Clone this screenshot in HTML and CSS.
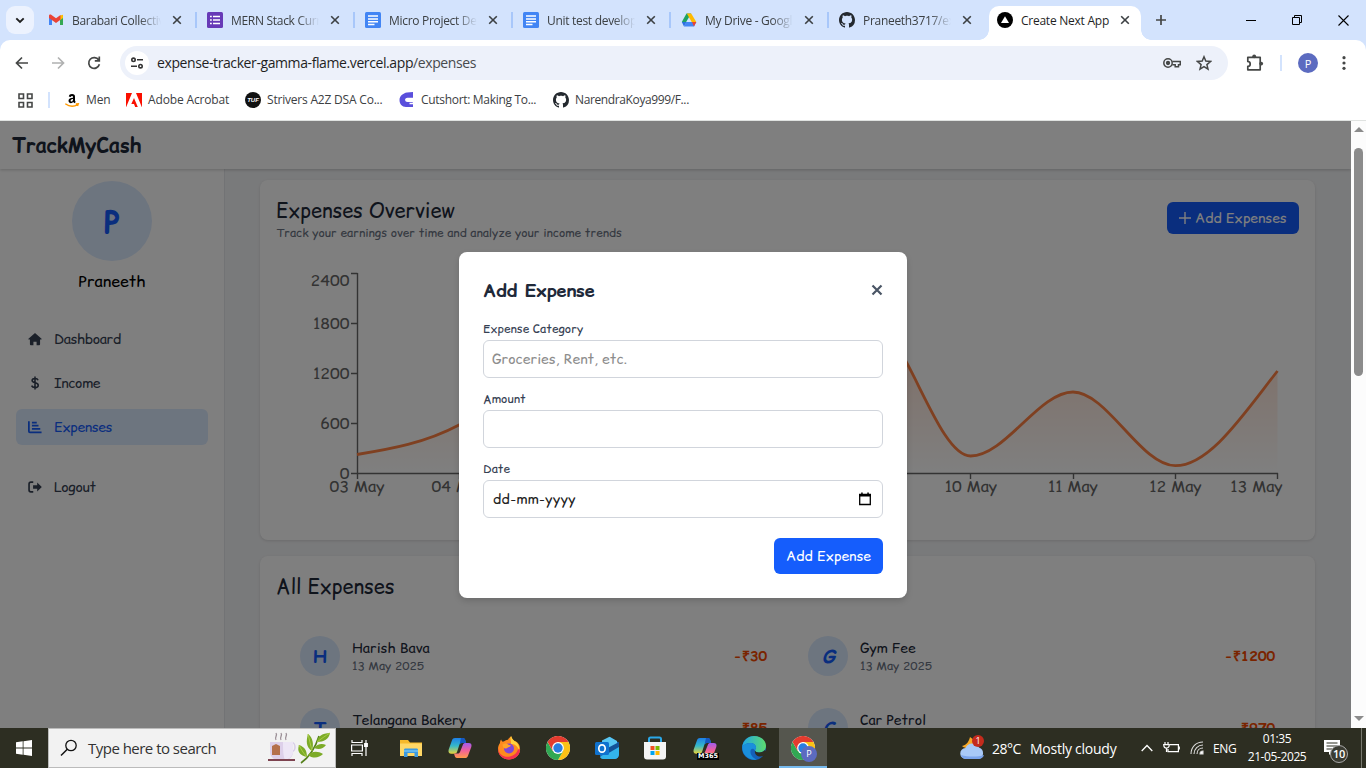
FILE: index.html
```html
<!DOCTYPE html>
<html lang="en">
<head>
<meta charset="utf-8">
<title>Create Next App</title>
<link rel="stylesheet" href="styles.css">
</head>
<body>
<svg width="0" height="0" class="defs">
  <defs>
    <symbol id="x" viewBox="0 0 10 10"><path d="M1.2 1.2l7.6 7.6M8.8 1.2L1.2 8.8" stroke="currentColor" stroke-width="1.6" fill="none"/></symbol>
    <symbol id="doc" viewBox="0 0 16 16"><rect width="16" height="16" rx="1.5" fill="#4285f4"/><path d="M3 4h10M3 7h10M3 9.700h10M3 12.500h6.500" stroke="#fff" stroke-width="1.400"/></symbol>
    <symbol id="gh" viewBox="0 0 16 16"><path fill="#24292f" d="M8 0C3.580 0 0 3.580 0 8c0 3.540 2.290 6.530 5.470 7.590.4.070.550-.170.550-.380 0-.190-.010-.820-.010-1.490-2.010.370-2.530-.490-2.690-.940-.090-.230-.480-.940-.820-1.130-.280-.150-.680-.520-.010-.530.630-.010 1.080.580 1.230.820.720 1.210 1.870.870 2.330.660.070-.520.280-.870.510-1.070-1.780-.200-3.640-.890-3.640-3.950 0-.870.310-1.590.820-2.150-.080-.200-.360-1.020.080-2.120 0 0 .670-.210 2.200.820.640-.180 1.320-.270 2-.270s1.360.090 2 .270c1.530-1.040 2.200-.820 2.200-.820.440 1.100.160 1.920.080 2.120.510.560.820 1.270.820 2.150 0 3.070-1.870 3.750-3.650 3.950.290.250.540.730.540 1.480 0 1.070-.010 1.930-.010 2.200 0 .210.150.460.550.380A8.010 8.010 0 0 0 16 8c0-4.420-3.580-8-8-8z"/></symbol>
    <symbol id="chrome" viewBox="0 0 24 24"><circle cx="12" cy="12" r="12" fill="#fff"/><path d="M12 6H22.400A12 12 0 0 1 12 24L17.200 15z" fill="#fbc116"/><path d="M6.800 15L1.600 6A12 12 0 0 0 12 24L17.200 15z" fill="#31a853"/><path d="M1.600 6A12 12 0 0 1 22.400 6H12L6.800 15z" fill="#e33b2e"/><circle cx="12" cy="12" r="5.900" fill="#fff"/><circle cx="12" cy="12" r="4.700" fill="#2a7de1"/></symbol>
    <linearGradient id="cpA" x1="0" y1="0" x2="0" y2="1"><stop offset="0" stop-color="#1d7fe8"/><stop offset=".5" stop-color="#35b8c9"/><stop offset="1" stop-color="#e8d43a"/></linearGradient>
    <linearGradient id="cpB" x1="0" y1="0" x2="0" y2="1"><stop offset="0" stop-color="#a25bf0"/><stop offset=".5" stop-color="#f0609a"/><stop offset="1" stop-color="#ff9a4a"/></linearGradient>
    <symbol id="copilot" viewBox="0 0 24 24"><path d="M7 2h8c1.500 0 2 1 2.400 2.500L18 7h-4c-1.500 0-2.300.8-2.800 2.300L9.200 15.500c-.5 1.500-1.300 2.200-3 2.200H3.500C.8 17.700 0 16 .7 13.500L4 4.300C4.500 2.800 5.500 2 7 2z" fill="url(#cpA)"/><path d="M13 2h2c1.500 0 2 1 2.400 2.500L18 7h-4c-1.200 0-2 .5-2.500 1.500z" fill="#1457c2"/><path d="M17 22H9c-1.500 0-2-1-2.400-2.500L6 17.500h3.500c1.500 0 2.300-.8 2.800-2.300l2.500-6.200c.5-1.500 1.300-2 3-2h2.700c2.700 0 3.500 1.500 2.800 4l-3.300 8.700C19.500 21.200 18.500 22 17 22z" fill="url(#cpB)"/></symbol>
  </defs>
</svg>

<div class="screen">
  <header class="tabs">
    <button class="tab-search"><svg width="10" height="7" viewBox="0 0 10 7"><path d="M1.300 1.300L5 5l3.700-3.700" fill="none" stroke="#1f1f1f" stroke-width="1.900"/></svg></button>
    <div class="tab first"><svg class="fav" viewBox="0 0 16 16"><path d="M1 4v9h3V6.500z" fill="#4285f4"/><path d="M15 4v9h-3V6.500z" fill="#34a853"/><path d="M12 3.500L15 2.800V6l-3 2.300z" fill="#fbbc04"/><path d="M1 3.800C1 2.500 2.500 2.200 3.500 3L8 6.300 12.500 3v4.800L8 11 1 6z" fill="#ea4335"/></svg><span>Barabari Collective</span><svg class="tx"><use href="#x"/></svg></div>
    <div class="tab"><svg class="fav" viewBox="0 0 16 16"><rect width="16" height="16" rx="1.500" fill="#673ab7"/><path d="M6 4.500h7M6 8h7M6 11.500h7" stroke="#fff" stroke-width="1.700"/><path d="M3 4.500h1.800M3 8h1.800M3 11.500h1.800" stroke="#fff" stroke-width="1.700"/></svg><span>MERN Stack Curriculum</span><svg class="tx"><use href="#x"/></svg></div>
    <div class="tab"><svg class="fav"><use href="#doc"/></svg><span>Micro Project Details</span><svg class="tx"><use href="#x"/></svg></div>
    <div class="tab"><svg class="fav"><use href="#doc"/></svg><span>Unit test development</span><svg class="tx"><use href="#x"/></svg></div>
    <div class="tab"><svg class="fav" viewBox="0 0 16 16"><path d="M5.500 1.500h4.600L4 12 .8 10z" fill="#1ea362"/><path d="M5.800 1.500h4.400L15.300 10h-4.600z" fill="#ffba00"/><path d="M3 14.500L5.200 10h10.100L13 14.500z" fill="#4285f4"/><path d="M.8 10L3 14.500 5.200 10z" fill="#2b6fe0"/><path d="M11 10h4.300L13 14.500z" fill="#ea4335"/></svg><span>My Drive - Google Drive</span><svg class="tx"><use href="#x"/></svg></div>
    <div class="tab"><svg class="fav"><use href="#gh"/></svg><span>Praneeth3717/expense</span><svg class="tx"><use href="#x"/></svg></div>
    <div class="tab active"><svg class="fav" viewBox="0 0 16 16"><circle cx="8" cy="8" r="8"/><path d="M8 4.300l4 6.700H4z" fill="#fff"/></svg><span>Create Next App</span><svg class="tx"><use href="#x"/></svg></div>
    <svg class="plus" width="12" height="12" viewBox="0 0 12 12"><path d="M6 1v10M1 6h10" stroke="#454746" stroke-width="1.700"/></svg>
    <div class="win">
      <svg width="10" height="10"><path d="M0 5.500h10" stroke="#000"/></svg>
      <svg width="10" height="10"><path d="M.5 2.500h7v7h-7zM2.500 2.500v-2h7v7h-2" fill="none" stroke="#000"/></svg>
      <svg width="11" height="11"><path d="M.5.5l10 10M10.500.5l-10 10" stroke="#000" stroke-width="1.100"/></svg>
    </div>
  </header>

  <div class="chrome-body">
    <div class="toolbar">
      <svg class="nav" viewBox="0 0 16 16"><path d="M14 8H3M8 2.500L2.500 8 8 13.500" fill="none" stroke="#454746" stroke-width="1.700"/></svg>
      <svg class="nav" viewBox="0 0 16 16"><path d="M2 8h11M8 2.500L13.500 8 8 13.500" fill="none" stroke="#b0b1b1" stroke-width="1.700"/></svg>
      <svg class="nav" viewBox="0 0 16 16"><path d="M12.700 5A5.400 5.400 0 1 0 13.400 9.300M13.300 1.500v4.400H8.800" fill="none" stroke="#454746" stroke-width="1.700"/></svg>
      <div class="omni">
        <span class="site"><svg width="14" height="14" viewBox="0 0 14 14" fill="none" stroke="#333" stroke-width="1.600"><circle cx="3.500" cy="3.800" r="1.700"/><path d="M7 3.800h6M1 10.200h6"/><circle cx="10.500" cy="10.200" r="1.700"/></svg></span>
        <p class="url">expense-tracker-gamma-flame.vercel.app<i>/expenses</i></p>
        <svg class="key" width="18" height="12" viewBox="0 0 18 12" fill="none" stroke="#454746" stroke-width="1.500"><circle cx="5" cy="6" r="4.200"/><circle cx="5" cy="6" r="1.400" fill="#454746"/><path d="M9.300 4.500h8v3.300h-1.800v2h-3.300V7.800H9.300"/></svg>
        <svg class="star" width="16" height="16" viewBox="0 0 16 16"><path d="M8 1.800l1.800 4.300 4.700.4-3.600 3.100 1.100 4.600L8 11.700l-4 2.500 1.100-4.600L1.500 6.500l4.700-.4z" fill="none" stroke="#454746" stroke-width="1.500"/></svg>
      </div>
      <svg class="ext" width="18" height="18" viewBox="0 0 18 18"><path d="M1.800 3.300h12.400v12.500H1.800v-3.500a2.200 2.200 0 0 0 0-4.800z" fill="none" stroke="#454746" stroke-width="1.700" stroke-linejoin="round"/><circle cx="8.200" cy="2.300" r="1.900" fill="#454746"/><circle cx="15.200" cy="9.600" r="1.900" fill="#454746"/></svg>
      <i class="vbar"></i>
      <b class="prof">P</b>
      <svg class="dots" width="4" height="14" viewBox="0 0 4 14" fill="#454746"><circle cx="2" cy="1.700" r="1.600"/><circle cx="2" cy="7" r="1.600"/><circle cx="2" cy="12.300" r="1.600"/></svg>
    </div>
    <div class="marks">
      <svg class="apps" width="15" height="15" viewBox="0 0 15 15" fill="none" stroke="#454746" stroke-width="1.600"><path d="M1 1h4.500v4.500H1zM9.500 1H14v4.500H9.500zM1 9.500h4.500V14H1zM9.500 9.500H14V14H9.500z"/></svg>
      <i class="vbar"></i>
      <div class="mark m1"><svg class="fav" viewBox="0 0 16 16"><path d="M4.800 4.500C5 2.600 6.200 1.900 8 1.900c2.200 0 3 1 3 2.800v3.600c0 .8.300 1.200.8 1.700l-1.500 1.200-1-1.100c-1.600 1.900-4.800 1.300-4.800-1.400 0-2.100 1.800-3 4.500-3v-.8c0-1.200-1.900-1.400-2.300 0zM9 7c-2.700 0-2.900 2.600-1.500 2.600C8.600 9.600 9 8.500 9 7z"/><path d="M1.300 11.800c4 2.900 8.700 3 12.400.8M11.800 12l2.500-.2-.8 2.300" stroke="#f90" stroke-width="1.400" fill="none"/></svg><span>Men</span></div>
      <div class="mark m2"><svg class="fav" viewBox="0 0 16 16"><path d="M0 1h6L.2 15H0zM16 1h-6l5.800 14h.2zM8 6l3.800 9H9.200l-1.200-3H5.300z" fill="#fa0f00"/></svg><span>Adobe Acrobat</span></div>
      <div class="mark m3"><b class="tuf">TUF</b><span>Strivers A2Z DSA Co...</span></div>
      <div class="mark m4"><svg class="fav" viewBox="0 0 16 16"><path d="M14 0v5.800H8.500c-1.600 0-2.300 1-2.300 2.300s.8 2 2.300 2H14V15H7C3 15 .5 12 .5 8S4 1.200 8 .5z" fill="#5a4fdc"/><path d="M6.500 7.500h8v4h-4" fill="none" stroke="#fff" stroke-width="1.500"/></svg><span>Cutshort: Making To...</span></div>
      <div class="mark m5"><svg class="fav"><use href="#gh"/></svg><span>NarendraKoya999/F...</span></div>
    </div>
  </div>

  <div class="page">
    <div class="app">
      <header class="brand">TrackMyCash</header>
      <div class="cols">
        <aside>
          <div class="avatar">P</div>
          <p class="name">Praneeth</p>
          <nav>
            <a><svg viewBox="0 0 16 16"><path d="M8 1L.5 7.700c-.3.400 0 .9.500.9h1.200v5.400c0 .6.400 1 1 1h3v-4h3.600v4h3c.6 0 1-.4 1-1V8.600H15c.5 0 .8-.5.500-.9z"/></svg><span>Dashboard</span></a>
            <a><svg viewBox="0 0 16 16"><path d="M11.500 4.800C11 3.300 9.700 2.800 8 2.800c-2 0-3.300.9-3.300 2.400C4.700 8.600 11.700 7 11.700 10.500c0 1.800-1.500 2.700-3.700 2.700-2 0-3.400-.8-3.900-2.200M8 .5v15" fill="none" stroke="currentColor" stroke-width="1.800"/></svg><span>Income</span></a>
            <a class="on"><svg viewBox="0 0 16 16"><path d="M1 1.500v11.300c0 .8.400 1.200 1.200 1.200H15.500M4.500 3h5.500M4.500 6.500h7.500M4.500 10h9.500" fill="none" stroke="currentColor" stroke-width="2"/></svg><span>Expenses</span></a>
            <a class="out"><svg viewBox="0 0 16 16"><path d="M6 2.500H3.300C2 2.500 1.200 3.300 1.200 4.600v6.800c0 1.300.8 2.100 2.100 2.100H6" fill="none" stroke="currentColor" stroke-width="1.900"/><path d="M15.800 8l-5.300-5.200V6H5.800v4h4.700v3.200z"/></svg><span>Logout</span></a>
          </nav>
        </aside>
        <main>
          <section class="card chart-card">
            <div class="card-head">
              <div><h2>Expenses Overview</h2><p>Track your earnings over time and analyze your income trends</p></div>
              <button class="btn add"><svg width="12" height="12" viewBox="0 0 12 12"><path d="M6 0v12M0 6h12" stroke="#fff" stroke-width="1.400"/></svg>Add Expenses</button>
            </div>
            <svg class="chart" width="1023" height="270" viewBox="276 250 1023 270">
              <defs><linearGradient id="ar" x1="0" y1="0" x2="0" y2="1"><stop offset="0" stop-color="#ff8042" stop-opacity=".3"/><stop offset="1" stop-color="#ff8042" stop-opacity="0"/></linearGradient></defs>
              <path d="M357 454.500C391 449 425 443 459 425S527 340 561 340S629 420 663.800 420S732 380 766 380S834 319 868.300 319S936 456 970.600 456S1039 392 1073 392S1141 465.700 1175.300 465.700S1243 415 1277.500 371V473H357z" fill="url(#ar)"/>
              <path d="M357.500 273v200M351 273.500h6.500M351 323.500h6.500M351 373.500h6.500M351 423.500h6.500M351 473.500H1278M357.500 473v6M459.500 473v6M970.500 473v6M1073.500 473v6M1175.500 473v6M1277.500 473v6" stroke="#666" fill="none" stroke-width="1.400"/>
              <path d="M357 454.500C391 449 425 443 459 425S527 340 561 340S629 420 663.800 420S732 380 766 380S834 319 868.300 319S936 456 970.600 456S1039 392 1073 392S1141 465.700 1175.300 465.700S1243 415 1277.500 371" fill="none" stroke="#ff8042" stroke-width="2.800"/>
              <g class="yl"><text x="349.500" y="286">2400</text><text x="349.500" y="329">1800</text><text x="349.500" y="379">1200</text><text x="349.500" y="429">600</text><text x="349.500" y="479">0</text></g>
              <g class="xl"><text x="357" y="492">03 May</text><text x="459" y="492">04 May</text><text x="971" y="492">10 May</text><text x="1073" y="492">11 May</text><text x="1175.500" y="492">12 May</text><text x="1256.500" y="492">13 May</text></g>
            </svg>
          </section>
          <section class="card list-card">
            <h2>All Expenses</h2>
            <div class="grid">
              <div class="row"><b class="ini">H</b><div><p>Harish Bava</p><small>13 May 2025</small></div><strong>-₹30</strong></div>
              <div class="row"><b class="ini slant">G</b><div><p>Gym Fee</p><small>13 May 2025</small></div><strong>-₹1200</strong></div>
              <div class="row"><b class="ini">T</b><div><p>Telangana Bakery</p><small>12 May 2025</small></div><strong>-₹85</strong></div>
              <div class="row"><b class="ini slant">C</b><div><p>Car Petrol</p><small>11 May 2025</small></div><strong>-₹970</strong></div>
            </div>
          </section>
        </main>
      </div>
      <div class="overlay">
        <form class="modal">
          <div class="modal-head"><h3>Add Expense</h3><svg width="12" height="12"><path d="M1.500 1.500l9 9M10.500 1.500l-9 9" stroke="#4a5565" stroke-width="2.200"/></svg></div>
          <label>Expense Category</label>
          <div class="field ph">Groceries, Rent, etc.</div>
          <label>Amount</label>
          <div class="field"></div>
          <label>Date</label>
          <div class="field date"><span>dd-mm-yyyy</span><svg width="12" height="14" viewBox="0 0 12 14"><path d="M.7 2.500h10.600v10H.7z" fill="none" stroke="#000" stroke-width="1.300"/><path d="M0 2h12v2.500H0zM2.200.5h1.500V3H2.200zM8.300.5h1.500V3H8.300z"/></svg></div>
          <button class="btn submit" type="button">Add Expense</button>
        </form>
      </div>
    </div>
    <div class="scroll"><i class="up"></i><i class="thumb"></i><i class="down"></i></div>
  </div>

  <footer class="taskbar">
    <div class="start"><svg width="16" height="16" viewBox="0 0 16 16" fill="#fff"><path d="M0 2.300L6.700 1.300v6.300H0zM7.500 1.200L16 0v7.600H7.500zM0 8.400h6.700v6.300L0 13.700zM7.500 8.400H16V16l-8.500-1.200z"/></svg></div>
    <div class="search">
      <svg width="18" height="18" viewBox="0 0 18 18"><circle cx="11" cy="6.500" r="5.200" fill="none" stroke="#111" stroke-width="1.300"/><path d="M7.300 10.300L1 16.500" stroke="#111" stroke-width="1.500"/></svg>
      <span>Type here to search</span>
      <svg class="tea" width="64" height="34" viewBox="0 0 64 34">
        <path d="M9 2c2 3-2 4 0 7M14 2c2 3-2 4 0 7M19 2c2 3-2 4 0 7" stroke="#9b8f96" fill="none" stroke-width="1.300"/>
        <ellipse cx="25" cy="16" rx="3" ry="4.500" fill="none" stroke="#d8cde8" stroke-width="1.500"/>
        <path d="M3 11h23v10c0 5-4 8-8 8h-7c-5 0-8-4-8-8z" fill="#ddd0ea"/><path d="M16 11h10v10c0 4-4 7-8 8-2-4-2-12-2-18z" fill="#ede6f6"/>
        <path d="M5 15l4-2 4 2v9H5z" fill="#b4704c"/><path d="M1 28h27v2H1z" fill="#7d4350"/>
        <path d="M34 32C41 27 48 18 52 5" stroke="#55801c" fill="none" stroke-width="1.600"/>
        <path d="M40 26c-8-2-10-6-8-12 6 2 8 6 8 12zM45 20c-6-4-6-10-4-17 5 4 6 10 4 17zM50 11c0-5 5-9 13-9-1 6-6 9-13 9zM47 17c3-4 8-5 12-3-3 4-7 5-12 3zM41 24c4-4 10-4 15-1-4 4-10 5-15 1z" fill="#7cab28"/>
        <path d="M40 26c-4-4-6-8-8-12M45 20c-1-6-3-11-4-17M50 11c4-3 8-6 13-9" stroke="#a9cc45" fill="none"/>
      </svg>
    </div>
    <div class="ti tv"><svg width="17" height="16" viewBox="0 0 17 16" fill="none" stroke="#fff" stroke-width="1.200"><path d="M1 0v2.500h10V0M1 16v-2.500h10V16M.6 5h10.800v6H.6zM15 0v16"/><path d="M13.700 3.500h2.600v3h-2.600z" fill="#fff"/></svg></div>
    <div class="ti"><svg width="22" height="20" viewBox="0 0 22 20"><path d="M0 2h8l2 2.500h12V18H0z" fill="#f7b92b"/><path d="M0 5.500h22V18H0z" fill="#ffd766"/><path d="M4 19v-7c0-1 .5-1.500 1.500-1.500h11c1 0 1.500.5 1.500 1.500v7h-3.500v-4h-7v4z" fill="#3d9ae0"/><path d="M4 12h14v2H4z" fill="#63b8f0"/></svg></div>
    <div class="ti"><svg width="24" height="24"><use href="#copilot"/></svg></div>
    <div class="ti"><svg width="24" height="24" viewBox="0 0 24 24"><path d="M3 7c0-1.500.5-3 1.200-3.500.3 1.200.8 1.800 1.500 2.200C8 5 9 4 11 3.700c.8-1.300 2-2.700 3.500-3.200 0 2 1.500 3 3 4.500C21.500 6 23.500 10 23 14.500 22 20 17.500 23.500 12 23.500 6 23.500 1 19 1 13c0-2.500.8-4.500 2-6z" fill="#ff8a1e"/><path d="M1.200 12C2 20 8 21.500 13 20.500c4-.8 7-3.500 8-7.500 2-1 1.900 1 1.900 2C22 20.500 17 23.500 12 23.500c-6 0-11.500-4-10.800-11.500z" fill="#f5314f"/><path d="M14.500.5c0 2 1.500 3 3 4.500 4 2 5 6 4.500 9-2-5-5-6-8-6 .5-2-1-4-.5-7.500z" fill="#ffd23e"/><circle cx="12" cy="12.500" r="5" fill="#8046d8"/><path d="M5.500 8.500c2-1.500 4.500-1 6 .3l2.500.7c-1 1.500-2.800 1.500-4 2.500-1.800 1.500-4.500 0-4.500-3.500z" fill="#ffa427"/></svg></div>
    <div class="ti"><svg width="24" height="24"><use href="#chrome"/></svg></div>
    <div class="ti"><svg width="24" height="24" viewBox="0 0 24 24"><path d="M5 7L15 1l9 6v11c0 3-2 5-4.500 5H9c-2.500 0-4-2-4-4z" fill="#1a6fc4"/><path d="M7 4.500L14.500.8 22 5v6l-8 5-7-4z" fill="#58c7f3"/><path d="M24 8v10c0 3-2 5-5 5H8c-1.500 0-2.500-1-3-2z" fill="#33b4ec"/><path d="M24 6v5L12 18l-5-3z" fill="#135298"/><rect x="0" y="6" width="14" height="13" rx="1.500" fill="#0f72cf"/><ellipse cx="7" cy="12.500" rx="3.200" ry="3.700" fill="none" stroke="#fff" stroke-width="1.700"/></svg></div>
    <div class="ti st"><svg width="24" height="24" viewBox="0 0 24 24"><path d="M6 7V3c0-1 .5-1.500 1.500-1.500h9c1 0 1.500.5 1.500 1.500v4" fill="none" stroke="#2aa8e8" stroke-width="2"/><path d="M1 6h22v14.500c0 2-1 3-3 3H4c-2 0-3-1-3-3z" fill="#f4f4f4"/><path d="M7.500 10h4v4h-4z" fill="#f25022"/><path d="M12.500 10h4v4h-4z" fill="#7fba00"/><path d="M7.500 15h4v4h-4z" fill="#00a4ef"/><path d="M12.500 15h4v4h-4z" fill="#ffb900"/></svg></div>
    <div class="ti m365"><svg width="24" height="24"><use href="#copilot"/></svg><b>M365</b></div>
    <div class="ti"><svg width="24" height="24" viewBox="0 0 24 24"><defs><linearGradient id="eg"><stop offset="0" stop-color="#1fa6e6"/><stop offset="1" stop-color="#5ddb6e"/></linearGradient></defs><circle cx="12" cy="12" r="12" fill="#1560b8"/><path d="M.2 11C1 4.500 6 0 12 0c7 0 12 4.500 12 10 0 4-3 6.500-7 6.500-2.500 0-4-1-4-2 0-1 1-1.500 1-3C14 9 11.500 7 8.500 7 4.500 7 1.500 9 .2 11z" fill="url(#eg)"/><path d="M.2 11C1.500 8.500 5 7 8.500 7 11.500 7 14 9 14 11.500c0 1.200-.8 2-1 3-1-2-3-2.500-4-1C7.500 16 9 21.500 15 23.500 8 25 0 20 .2 11z" fill="#1a8fdc"/><path d="M13 14.500c.3 1.200 2 2 4 2 2.500 0 4.500-1 5.500-2.200L24.500 15c-.5 2-1.300 3.300-2.500 4.800C17 22 12 19.500 13 14.500z" fill="#2d2e22"/></svg></div>
    <div class="ti run"><svg width="24" height="24"><use href="#chrome"/></svg><b>P</b></div>
    <div class="tray">
      <div class="wx"><svg width="26" height="26" viewBox="0 0 26 26"><path d="M11 2c-1 4-3 8-8 9 3 3 9 3 12-1V5z" fill="#f9a825"/><path d="M7 24a5.500 5.500 0 0 1-.5-11A7.500 7.500 0 0 1 20 12.500 6 6 0 0 1 19.500 24z" fill="#a9c9f7"/><path d="M2 20c1 3 3 4 5 4h12.500c3 0 5-2 5.500-4-6 2-16 2-23 0z" fill="#7ba4ec"/></svg><b>1</b></div>
      <span class="temp">28°C</span><span class="cloud">Mostly cloudy</span>
      <svg class="chev" width="12" height="8"><path d="M.7 7L6 1.500 11.300 7" fill="none" stroke="#fff" stroke-width="1.300"/></svg>
      <svg class="bat" width="17" height="12" viewBox="0 0 17 12" fill="none" stroke="#fff" stroke-width="1.200"><path d="M7 2.600h8.400v7H5V7M16.300 4.500v3M2 0v2.500M5 0v2.500M.7 2.600h5.600c0 2.500-1 3.500-2.800 3.500S.7 5 .7 2.600zM3.500 6v4"/></svg>
      <svg class="wifi" width="14" height="14" viewBox="0 0 14 14" fill="none" stroke="#ddd" stroke-width="1.100"><path d="M1 13C1 6 6 1 13 1M4 13c0-5 4-9 9-9M7 13c0-3.500 2.500-6 6-6"/><path d="M10 13c0-2 1-3 3-3v3z" fill="#fff"/></svg>
      <span class="eng">ENG</span>
      <div class="clock"><span>01:35</span><span>21-05-2025</span></div>
      <div class="note"><svg width="17" height="16" viewBox="0 0 17 16"><path d="M0 0h16v12H8l-3 3v-3H0z" fill="#fff"/><path d="M2.500 3h11M2.500 6h11M2.500 9h6" stroke="#2d2e22" stroke-width="1.200"/></svg><b>10</b></div>
      <i class="peek"></i>
    </div>
  </footer>
</div>
</body>
</html>
```
FILE: styles.css
```css
*{box-sizing:border-box}
body,p,h2,h3{margin:0}
body{font-family:"Open Sans",sans-serif;overflow:hidden}
button{border:0;padding:0;font:inherit}
svg{display:block;flex:none}
.defs{position:absolute}
.screen{width:1366px;height:768px;display:flex;flex-direction:column;background:#d3e3fd}

/* tab strip */
.tabs{height:40px;display:flex;align-items:center;flex:none}
.tab-search{width:28px;height:28px;margin:0 4px 0 6px;border-radius:9px;background:#ecf2fe;display:grid;place-items:center;flex:none}
.fav{width:16px;height:16px}
.tab{width:158px;height:34px;display:flex;align-items:center;position:relative;padding-left:11px;flex:none;font-size:12px;letter-spacing:-.3px;color:#3c4043}
.tab>span{margin-left:8px;width:90px;overflow:hidden;white-space:nowrap;mask-image:linear-gradient(90deg,#000 74%,transparent 98%)}
.first{padding-left:10px}
.first>span{width:91px}
.tab:not(.active):not(.first)::before{content:"";position:absolute;left:-1px;top:9px;width:2px;height:16px;background:#a8c7fa}
.tx{width:10px;height:10px;margin-left:9px;color:#3c4043}
.active{align-self:flex-end;z-index:0;padding-bottom:6px;color:#1f1f1f;letter-spacing:-.25px}
.active>span{mask-image:none}
.active::after{content:"";position:absolute;z-index:-1;left:3px;width:152px;top:0;bottom:0;background:#fff;border-radius:10px 10px 0 0}
.active::before{content:"";position:absolute;z-index:-1;left:-7px;width:172px;bottom:0;height:10px;background:radial-gradient(circle at 0 0,transparent 9.5px,#fff 10px) 0 0/10px 10px no-repeat,radial-gradient(circle at 100% 0,transparent 9.5px,#fff 10px) 100% 0/10px 10px no-repeat}
.plus{margin-left:11px}
.win{margin:0 17px 0 auto;display:flex;align-items:center;gap:36px}

/* toolbar */
.chrome-body{height:81px;background:#fff;border-radius:10px 10px 0 0;border-bottom:1px solid #dfe2e0;flex:none}
.toolbar{height:46px;display:flex;align-items:center}
.nav{width:16px;height:16px;margin-left:20px}
.nav:first-child{margin-left:14px}
.omni{width:1108px;height:34px;margin-left:18px;border-radius:17px;background:#edf1fa;display:flex;align-items:center;padding:0 16px 0 5px;flex:none}
.site{width:24px;height:24px;border-radius:50%;background:#fff;display:grid;place-items:center}
.url{margin-left:8px;font-size:14px;letter-spacing:-.4px;color:#1f1f1f;line-height:18px;padding-bottom:1px}
.url i{font-style:normal;color:#474a4d}
.key{margin-left:auto}.star{margin-left:15px}
.ext{margin-left:18px}
.vbar{width:2px;height:16px;background:#d3e3fd;margin-left:16px}
.prof{width:20px;height:20px;border-radius:50%;background:#5c6bc0;color:#fff;font-size:11px;font-weight:400;display:grid;place-items:center;margin-left:16px}
.dots{margin-left:24px}
.marks{display:flex;align-items:center;height:28px;font-size:12px;color:#3c4043;white-space:nowrap}
.apps{margin-left:18px}
.marks .vbar{margin-left:15px}
.mark{display:flex;align-items:center;gap:6px;padding-bottom:1px}
.m1{margin-left:14px;letter-spacing:-.1px;width:62px}
.m2{width:119px;letter-spacing:-.15px}
.m3{width:154px;letter-spacing:-.2px}
.m4{width:154px;letter-spacing:-.31px}
.m5{letter-spacing:-.38px}
.tuf{width:16px;height:16px;border-radius:50%;background:#111;color:#fff;font:italic 700 6px/16px "Liberation Sans",sans-serif;text-align:center;letter-spacing:0}

/* application */
.page{height:607px;display:flex;flex:none}
.app{width:1351px;height:607px;overflow:hidden;position:relative;background:#f3f4f6;font-family:"Comic Relief","Comic Neue","Open Sans",sans-serif}
.brand{height:48px;background:#fff;padding-left:12px;font-size:20px;font-weight:700;line-height:51px;color:#1e2939;box-shadow:0 1px 3px rgba(0,0,0,.2);position:relative}
.cols{display:flex;height:1000px}
aside{width:225px;background:#fff;border-right:1px solid #e5e7eb;padding:12px 16px 0}
.avatar{width:80px;height:80px;border-radius:50%;margin:0 auto;background:#dbeafe;color:#155dfc;font-size:30px;font-weight:700;line-height:82px;text-align:center}
.name{text-align:center;font-size:16px;line-height:24px;margin-top:8px;color:#000}
nav{margin-top:28px;display:flex;flex-direction:column;gap:8px}
nav a{height:36px;border-radius:6px;padding-left:12px;display:flex;align-items:center;gap:12px;font-size:14px;letter-spacing:-.35px;color:#364153}
nav svg{width:14px;height:14px;fill:currentColor}
nav .on{background:#dbeafe;color:#155dfc}
nav .out{margin-top:16px}
main{padding:11px 36px 0 35px;flex:1;display:flex;flex-direction:column;gap:16px}
.card{background:#fff;border-radius:8px;box-shadow:0 1px 3px rgba(0,0,0,.12);padding:17px 16px 0;width:1055px;flex:none}
.chart-card{height:360px}
.card h2{font-size:20px;font-weight:400;line-height:28px;color:#1e2939}
.card-head{display:flex;justify-content:space-between;height:53px}
.card-head p{font-size:12px;line-height:16px;color:#6a7282}
.btn{background:#155dfc;color:#fff;border-radius:6px;font-size:14px}
.add{width:132px;height:32px;margin-top:5px;display:flex;align-items:center;gap:4px;padding-left:12px}
.chart{overflow:visible}
.chart text{font-size:16px;fill:#666}
.yl{text-anchor:end}.xl{text-anchor:middle}
.list-card{height:400px}
.grid{display:grid;grid-template-columns:1fr 1fr;column-gap:16px;padding:19px 11px 0 12px}
.row{height:72px;display:flex;align-items:center;gap:12px;padding:0 13px 0 12px}
.ini{width:40px;height:40px;border-radius:50%;background:#dbeafe;color:#155dfc;font-size:18px;line-height:41px;text-align:center}
.slant{font-style:italic}
.row p{font-size:14px;line-height:20px;color:#1e2939}
.row small{display:block;font-size:12px;line-height:16px;color:#6a7282}
.row strong{margin-left:auto;font-size:14px;color:#f54900}
.overlay{position:absolute;inset:0;background:rgba(0,0,0,.5);display:flex;align-items:center;justify-content:center;padding-left:15px}
.modal{width:448px;height:346px;border-radius:8px;background:#fff;padding:25px 24px 24px;box-shadow:0 3px 6px rgba(0,0,0,.15);display:flex;flex-direction:column}
.modal-head{display:flex;justify-content:space-between;align-items:center;height:28px;margin-bottom:16px}
.modal-head svg{margin-bottom:2px}
h3{font-size:18px;line-height:28px;color:#1e2939}
label{font-size:12px;line-height:16px;height:16px;margin-bottom:3px;color:#364153}
.field{height:38px;border:1px solid #d1d5dc;border-radius:6px;margin-bottom:13px;padding:0 8px;display:flex;align-items:center;font-size:14px;color:#222;flex:none}
.ph{color:#8d8d8d}
.date{justify-content:space-between;padding:0 11px 0 9px;letter-spacing:.4px}
.submit{width:109px;height:36px;margin:7px 0 0 auto;flex:none}
.scroll{width:15px;background:#fcfcfc;display:flex;flex-direction:column;align-items:center}
.up{border:5px solid transparent;border-top:0;border-bottom:5px solid #8b8b8b;margin-top:6px}
.thumb{width:9px;height:228px;border-radius:5px;background:#8b8b8b;margin-top:16px}
.down{border:5px solid transparent;border-bottom:0;border-top:5px solid #8b8b8b;margin:auto 0 7px}

/* taskbar */
.taskbar{height:40px;flex:none;background:#2d2e22;display:flex;color:#fff}
.start{width:48px;display:grid;place-items:center}
.search{width:288px;background:#f2f2f2;border:1px solid #bbb;display:flex;align-items:center;padding-left:11px;font-size:15px;letter-spacing:-.52px;color:#333}
.search span{margin-left:10px;white-space:nowrap}
.tea{margin-left:auto;margin-right:4px}
.ti{width:49px;display:grid;place-items:center;position:relative;flex:none}
.tv{width:50px;padding-right:3px}
.st{padding-right:1px}
.m365 b{position:absolute;left:17px;top:25px;font:700 6.500px/7px "DejaVu Sans",sans-serif;background:#000;color:#fff;padding:0 1px}
.run{width:48px;margin-left:1px;background:#55564e;border-bottom:2px solid #76b9ed;padding-top:2px}
.run b{position:absolute;left:22px;top:18px;width:16px;height:16px;border-radius:50%;background:#5c6bc0;font-size:9px;font-weight:400;line-height:16px;text-align:center}
.tray{margin-left:auto;display:flex;align-items:center;width:407px}
.wx{position:relative}
.wx b{position:absolute;left:13px;top:0;width:12px;height:12px;border-radius:50%;background:#c42b1c;font-size:9px;line-height:12px;font-weight:400;text-align:center}
.temp{font-size:14px;letter-spacing:-.5px;margin-left:7px;width:38px}
.cloud{font-size:14px;letter-spacing:-.25px;width:110px;white-space:nowrap}
.chev{margin-left:1px}
.bat{margin-left:10px}.wifi{margin-left:10px}
.eng{font-size:12px;letter-spacing:-.4px;margin-left:9px;width:24px}
.clock{width:60px;margin-left:10px;display:flex;flex-direction:column;align-items:center;font-size:12px;line-height:18px;letter-spacing:-.4px}
.note{margin-left:17px;position:relative;width:26px}
.note b{position:absolute;left:6px;top:5px;width:18px;height:18px;border-radius:50%;background:#3b3c33;border:1px solid #aaa;font-size:11px;line-height:16px;text-align:center;font-weight:600;letter-spacing:-.4px}
.peek{width:1px;height:40px;background:#77786e;margin-left:auto;margin-right:4px}
```
